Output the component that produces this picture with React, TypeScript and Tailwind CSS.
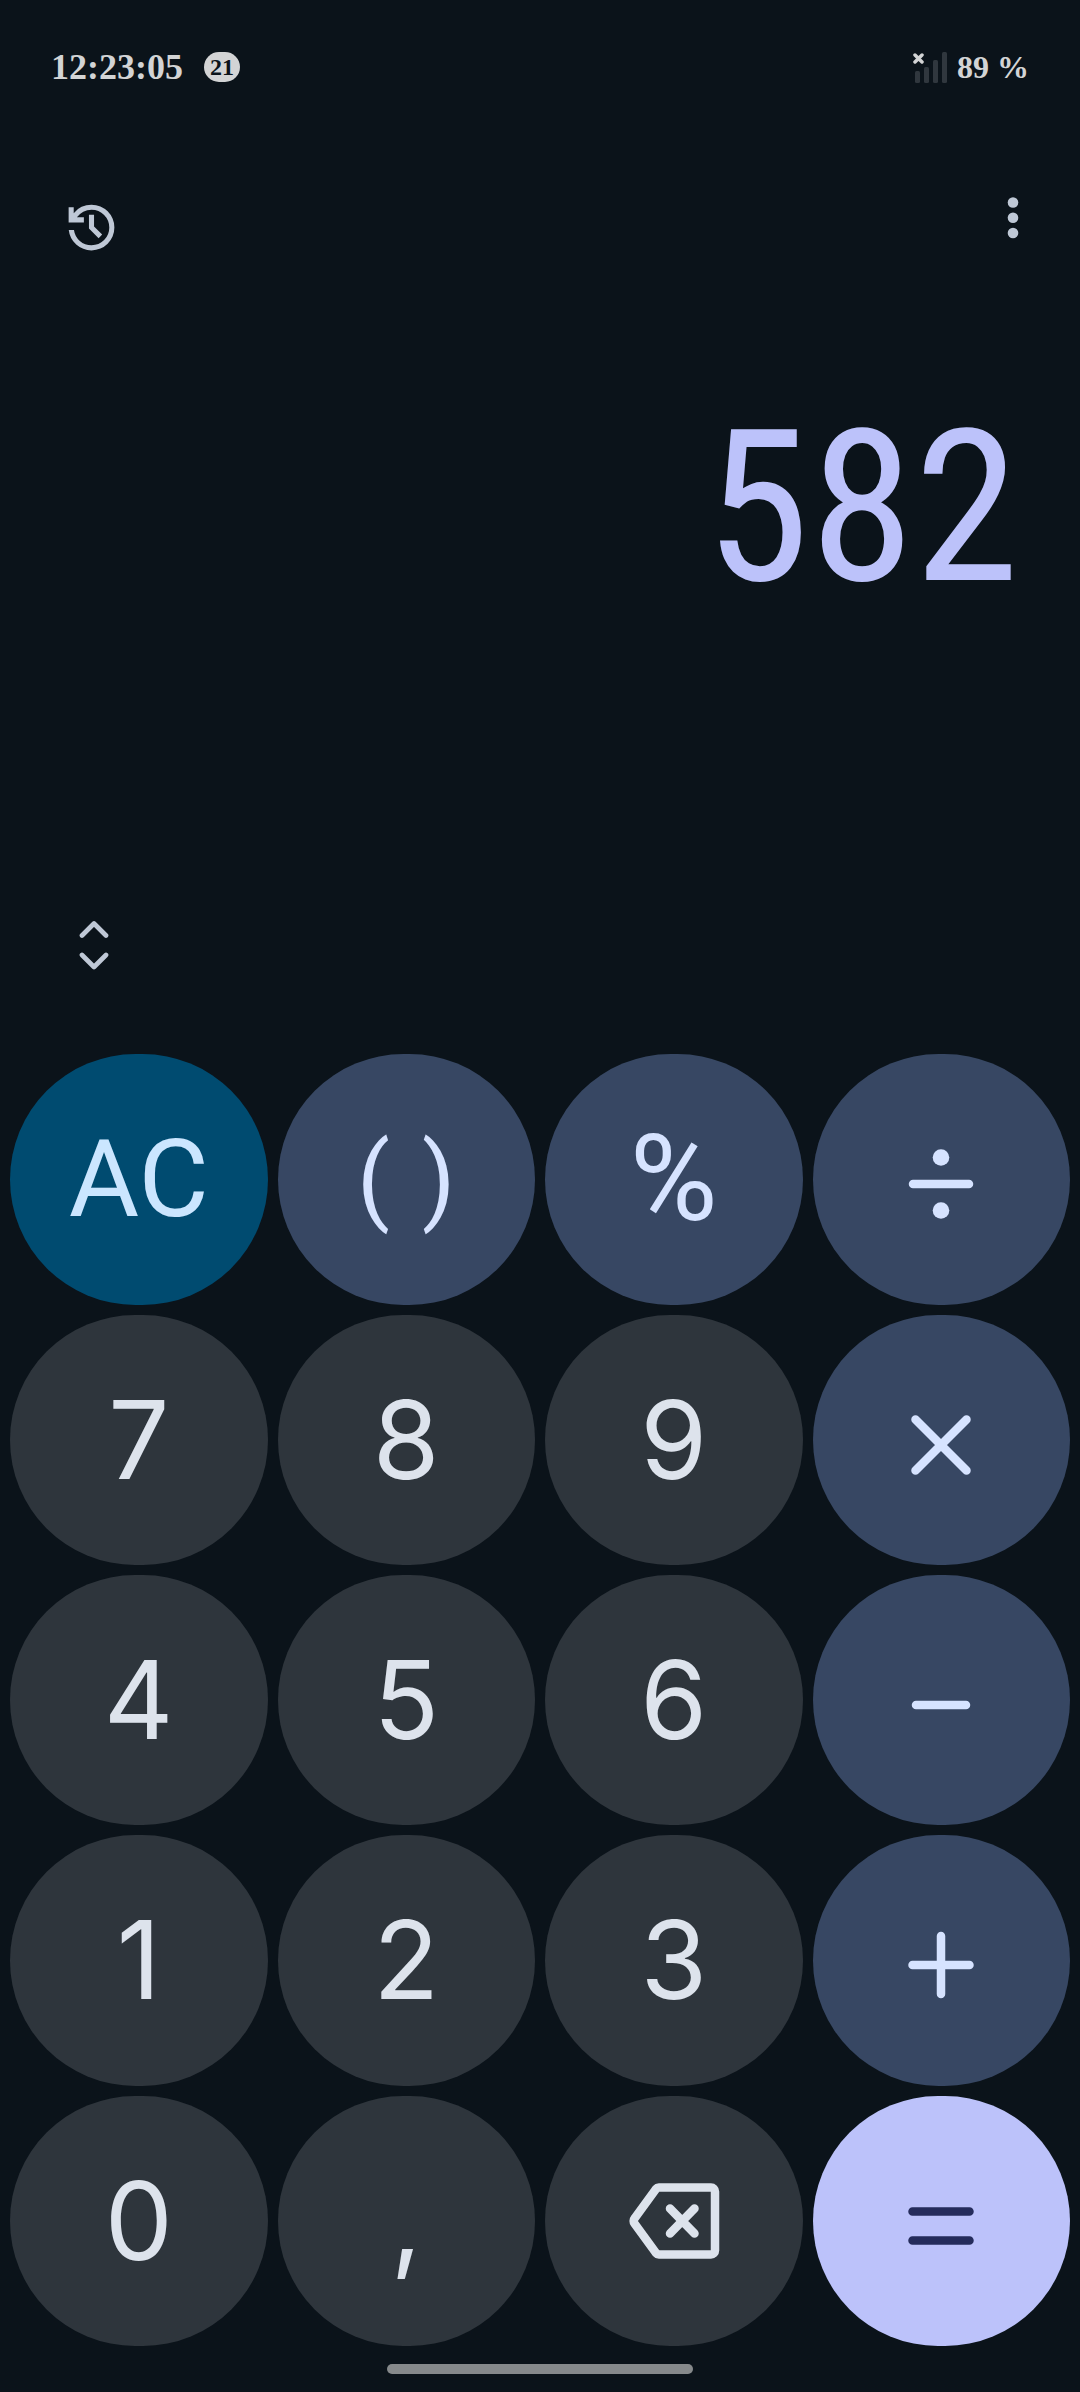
import { useState } from 'react';
import type { ReactNode } from 'react';
import clsx from 'clsx';

type KeyKind = 'clear' | 'operator' | 'digit' | 'equals';

interface CalcKey {
  id: string;
  kind: KeyKind;
  content: ReactNode;
  icon?: boolean;
}

const kindStyles: Record<KeyKind, string> = {
  clear: 'bg-[#004b70] text-[#cbe6ff]',
  operator: 'bg-[#374763] text-[#d6e3ff]',
  digit: 'bg-[#2e353c] text-[#dde3ec] font-[Inter,Roboto,sans-serif]',
  equals: 'bg-[#bcc2fa] text-[#252c5b]',
};

function OperatorIcon({ children }: { children: ReactNode }) {
  return (
    <svg
      className="mt-[10px] size-[80px]"
      viewBox="0 0 80 80"
      fill="none"
      stroke="currentColor"
      strokeWidth="8.5"
      strokeLinecap="round"
      aria-hidden="true"
    >
      {children}
    </svg>
  );
}

function BackspaceIcon() {
  return (
    <svg
      className="h-[76px] w-[92px]"
      viewBox="0 0 92 76"
      fill="none"
      stroke="currentColor"
      strokeWidth="8.5"
      strokeLinecap="round"
      strokeLinejoin="round"
      aria-hidden="true"
    >
      <path d="M31 4.5H83a4 4 0 0 1 4 4V67.500a4 4 0 0 1-4 4H31a4 4 0 0 1-3-1.500L6.500 40.500a4 4 0 0 1 0-5L28 6a4 4 0 0 1 3-1.500Z" />
      <path d="M42 25.500 66.500 50.500M66.500 25.500 42 50.500" />
    </svg>
  );
}

function HistoryIcon() {
  return (
    <svg className="size-[61px]" viewBox="0 -960 960 960" fill="currentColor" aria-hidden="true">
      <path d="M480-120q-138 0-240.5-91.5T122-440h82q14 104 92.5 172T480-200q117 0 198.5-81.5T760-480q0-117-81.5-198.5T480-760q-69 0-129 32t-101 88h110v80H120v-240h80v94q51-64 124.5-99T480-840q75 0 140.500 28.500t114 77q48.500 48.500 77 114T840-480q0 75-28.500 140.500t-77 114q-48.500 48.500-114 77T480-120Zm112-192L440-464v-216h80v184l128 128-56 56Z" />
    </svg>
  );
}

function SignalIcon() {
  return (
    <svg className="h-[32px] w-[35px]" viewBox="0 0 35 32" aria-hidden="true">
      <g fill="#30373e">
        <rect x="2" y="20" width="5" height="12" rx="1.500" />
        <rect x="11" y="16" width="5" height="16" rx="1.500" />
        <rect x="20" y="9" width="5" height="23" rx="1.500" />
        <rect x="29" y="1" width="5" height="31" rx="1.500" />
      </g>
      <path d="m2 4 7 7m0-7-7 7" stroke="#d3d4d5" strokeWidth="3.500" strokeLinecap="round" />
    </svg>
  );
}

const keys: CalcKey[] = [
  { id: 'AC', kind: 'clear', content: 'AC' },
  { id: '()', kind: 'operator', content: <span className="flex gap-[32px] text-[96px]"><span>(</span><span>)</span></span> },
  { id: '%', kind: 'operator', content: <span className="text-[120px]">%</span> },
  {
    id: '÷',
    kind: 'operator',
    icon: true,
    content: (
      <OperatorIcon>
        <path d="M12 40h56" />
        <circle cx="40" cy="13.500" r="8.300" fill="currentColor" stroke="none" />
        <circle cx="40" cy="66.500" r="8.300" fill="currentColor" stroke="none" />
      </OperatorIcon>
    ),
  },
  { id: '7', kind: 'digit', content: '7' },
  { id: '8', kind: 'digit', content: '8' },
  { id: '9', kind: 'digit', content: '9' },
  { id: '×', kind: 'operator', icon: true, content: <OperatorIcon><path d="m14.500 14.500 51 51m0-51-51 51" /></OperatorIcon> },
  { id: '4', kind: 'digit', content: '4' },
  { id: '5', kind: 'digit', content: '5' },
  { id: '6', kind: 'digit', content: '6' },
  { id: '−', kind: 'operator', icon: true, content: <OperatorIcon><path d="M15 40h50" /></OperatorIcon> },
  { id: '1', kind: 'digit', content: '1' },
  { id: '2', kind: 'digit', content: '2' },
  { id: '3', kind: 'digit', content: '3' },
  { id: '+', kind: 'operator', icon: true, content: <OperatorIcon><path d="M11.500 40h57M40 11v58" /></OperatorIcon> },
  { id: '0', kind: 'digit', content: '0' },
  { id: ',', kind: 'digit', content: ',' },
  { id: 'Backspace', kind: 'digit', icon: true, content: <BackspaceIcon /> },
  { id: '=', kind: 'equals', icon: true, content: <OperatorIcon><path d="M11.500 25.500h57M11.500 54.500h57" /></OperatorIcon> },
];

export default function App() {
  const [value, setValue] = useState('582');

  const handleKey = (id: string) => {
    if (id === 'AC') {
      setValue('');
    } else if (id === 'Backspace') {
      setValue((v) => v.slice(0, -1));
    } else if (id !== '=') {
      setValue((v) => v + id);
    }
  };

  return (
    <div className="flex min-h-screen flex-col bg-[#0b131a] font-[Roboto,sans-serif]">
      {/* Status bar */}
      <header className="flex h-[134px] items-center justify-between px-[51px] font-['Liberation_Serif',serif] font-bold text-[#d3d4d5]">
        <div className="flex items-center gap-[21px]">
          <span className="text-[36px]">12:23:05</span>
          <span className="flex h-[30px] w-[36px] items-center justify-center rounded-full bg-[#d3d4d5] text-[24px] text-[#0b131a]">
            21
          </span>
        </div>
        <div className="flex items-center gap-[9px]">
          <SignalIcon />
          <span className="text-[32px]">89 %</span>
        </div>
      </header>

      {/* Toolbar */}
      <div className="flex items-start justify-between px-[61px] pt-[63px] text-[#bfc8d6]">
        <button aria-label="History">
          <HistoryIcon />
        </button>
        <button aria-label="More options">
          <svg className="h-[42px] w-[12px]" viewBox="0 0 12 42" fill="currentColor" aria-hidden="true">
            <circle cx="6" cy="5.500" r="5.300" />
            <circle cx="6" cy="20.700" r="5.300" />
            <circle cx="6" cy="36" r="5.300" />
          </svg>
        </button>
      </div>

      {/* Result */}
      <main className="flex flex-1 flex-col justify-between px-[61px] pt-[144px] pb-[84px]">
        <output className="min-h-[212px] text-right font-['Roboto_Condensed',Roboto,sans-serif] text-[212px] leading-none text-[#bcc2fa]">
          {value}
        </output>
        <button aria-label="Expand keypad" className="self-start px-[16px] text-[#bfc8d6]">
          <svg
            className="h-[50px] w-[34px]"
            viewBox="0 0 34 50"
            fill="none"
            stroke="currentColor"
            strokeWidth="4.700"
            strokeLinecap="round"
            strokeLinejoin="round"
            aria-hidden="true"
          >
            <path d="m5 15.500 12-12 12 12M5 35l12 12 12-12" />
          </svg>
        </button>
      </main>

      {/* Keypad */}
      <div className="grid grid-cols-4 gap-[10px] px-[10px]">
        {keys.map((key) => (
          <button
            key={key.id}
            aria-label={key.icon ? key.id : undefined}
            onClick={() => handleKey(key.id)}
            className={clsx(
              'flex aspect-[36/35] items-center justify-center rounded-full text-[108px] leading-none',
              kindStyles[key.kind],
            )}
          >
            {key.content}
          </button>
        ))}
      </div>

      {/* Gesture bar */}
      <div className="flex h-[46px] items-start justify-center pt-[18px]">
        <div className="h-[10px] w-[306px] rounded-full bg-[#86898b]" />
      </div>
    </div>
  );
}
